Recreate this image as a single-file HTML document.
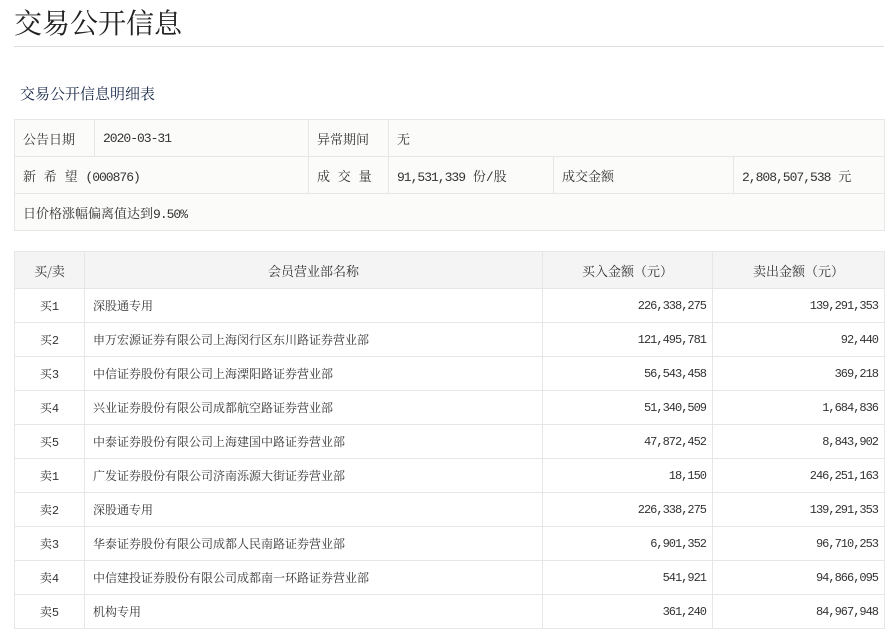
<!DOCTYPE html>
<html><head><meta charset="utf-8"><style>
body{margin:0;background:#fff;font-family:"Liberation Mono","Noto Serif CJK SC",serif;color:#333;width:896px;height:639px;overflow:hidden}
h1{position:absolute;left:14px;top:4px;margin:0;font-size:28px;font-weight:normal;font-family:"Noto Serif CJK SC",serif;color:#222;line-height:36px}
.hr{position:absolute;left:14px;top:46px;width:870px;height:1px;background:#ddd}
h2{position:absolute;left:20px;top:83px;margin:0;font-size:15px;font-weight:normal;font-family:"Noto Serif CJK SC",serif;color:#1a2a4a;line-height:22px}
table{position:absolute;border-collapse:collapse;table-layout:fixed;font-size:12px}
td,th{border:1px solid #e6e6e6;padding:0 8px;white-space:nowrap;overflow:hidden}
.n{letter-spacing:-1px}
#info{left:14px;top:119px;width:870px;background:#fbfbf9;font-size:13px}
#info td{height:36px}
#m{left:14px;top:251px;width:870px}
#m th{height:36px;background:#f4f4f4;font-weight:normal;font-size:13px;font-family:"Noto Serif CJK SC",serif}
#m td{height:33px}
.c{text-align:center}.r{text-align:right;letter-spacing:-1px;padding-right:6px}
</style></head><body>
<h1>交易公开信息</h1><div class="hr"></div>
<h2>交易公开信息明细表</h2>
<table id="info">
<colgroup><col style="width:80px"><col style="width:214px"><col style="width:80px"><col style="width:165px"><col style="width:180px"><col style="width:151px"></colgroup>
<tr><td>公告日期</td><td class="n">2020-03-31</td><td>异常期间</td><td colspan="3">无</td></tr>
<tr><td colspan="2">新 希 望 <span class="n">(000876)</span></td><td>成 交 量</td><td><span class="n">91,531,339</span> 份/股</td><td>成交金额</td><td><span class="n">2,808,507,538</span> 元</td></tr>
<tr><td colspan="6">日价格涨幅偏离值达到<span class="n">9.50%</span></td></tr>
</table>
<table id="m">
<colgroup><col style="width:70px"><col style="width:458px"><col style="width:170px"><col style="width:172px"></colgroup>
<tr><th>买/卖</th><th>会员营业部名称</th><th>买入金额（元）</th><th>卖出金额（元）</th></tr>
<tr><td class="c">买1</td><td>深股通专用</td><td class="r">226,338,275</td><td class="r">139,291,353</td></tr>
<tr><td class="c">买2</td><td>申万宏源证券有限公司上海闵行区东川路证券营业部</td><td class="r">121,495,781</td><td class="r">92,440</td></tr>
<tr><td class="c">买3</td><td>中信证券股份有限公司上海溧阳路证券营业部</td><td class="r">56,543,458</td><td class="r">369,218</td></tr>
<tr><td class="c">买4</td><td>兴业证券股份有限公司成都航空路证券营业部</td><td class="r">51,340,509</td><td class="r">1,684,836</td></tr>
<tr><td class="c">买5</td><td>中泰证券股份有限公司上海建国中路证券营业部</td><td class="r">47,872,452</td><td class="r">8,843,902</td></tr>
<tr><td class="c">卖1</td><td>广发证券股份有限公司济南泺源大街证券营业部</td><td class="r">18,150</td><td class="r">246,251,163</td></tr>
<tr><td class="c">卖2</td><td>深股通专用</td><td class="r">226,338,275</td><td class="r">139,291,353</td></tr>
<tr><td class="c">卖3</td><td>华泰证券股份有限公司成都人民南路证券营业部</td><td class="r">6,901,352</td><td class="r">96,710,253</td></tr>
<tr><td class="c">卖4</td><td>中信建投证券股份有限公司成都南一环路证券营业部</td><td class="r">541,921</td><td class="r">94,866,095</td></tr>
<tr><td class="c">卖5</td><td>机构专用</td><td class="r">361,240</td><td class="r">84,967,948</td></tr>
</table>
</body></html>
